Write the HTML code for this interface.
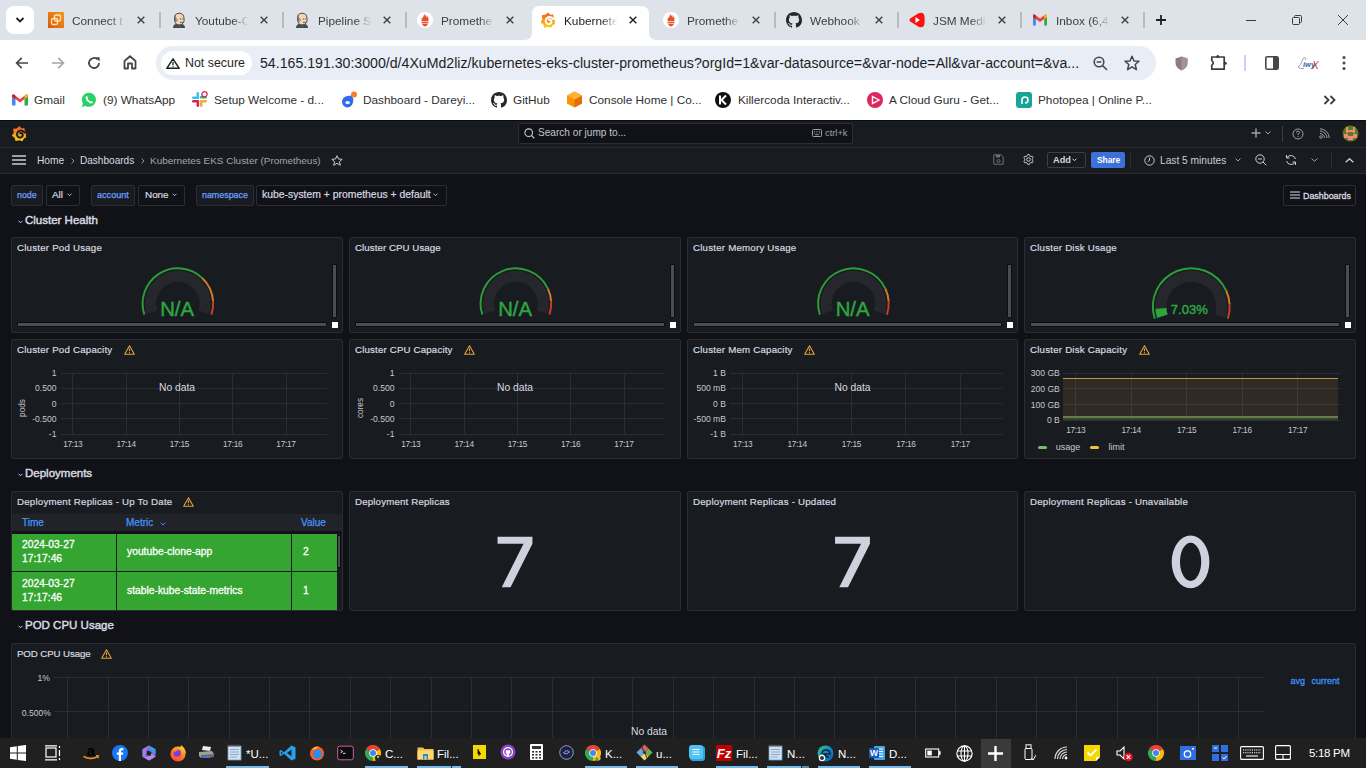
<!DOCTYPE html>
<html><head><meta charset="utf-8">
<style>
*{box-sizing:border-box;margin:0;padding:0}
html,body{width:1366px;height:768px;overflow:hidden;background:#111217;font-family:"Liberation Sans",sans-serif}
.a{position:absolute}
svg{display:block}
#tabs{position:absolute;left:0;top:0;width:1366px;height:40px;background:#dee3ea;overflow:hidden}
#toolbar{position:absolute;left:0;top:40px;width:1366px;height:46px;background:#fff}
#bm{position:absolute;left:0;top:86px;width:1366px;height:34px;background:#fff}
.tt{font-size:11.8px;white-space:nowrap;overflow:hidden;width:56px;line-height:14px;-webkit-mask-image:linear-gradient(90deg,#000 68%,transparent 96%)}
.bmt{position:absolute;top:7px;font-size:11.8px;line-height:14px;color:#303030;white-space:nowrap}
#g{position:absolute;left:0;top:120px;width:1366px;height:618px;background:#111217;overflow:hidden;color:#ccccdc}
.panel{position:absolute;background:#181b1f;border:1px solid #2a2c31;border-radius:2px;overflow:hidden}
.ptitle{position:absolute;left:5px;top:3.5px;font-size:9.7px;letter-spacing:0.22px;line-height:12px;font-weight:normal;-webkit-text-stroke:0.2px #d8d9e0;color:#d8d9e0;white-space:nowrap}
.rowt{position:absolute;left:25px;font-size:11.5px;line-height:14px;font-weight:normal;-webkit-text-stroke:0.45px #d8d9e0;color:#d8d9e0}
#task{position:absolute;left:0;top:738px;width:1366px;height:30px;background:#1f201f}

</style></head><body>
<div id="tabs"><div class="a" style="left:6px;top:6px;width:28px;height:28px;background:#fff;border-radius:8px"></div>
<svg class="a" style="left:15px;top:16px" width="10" height="8" viewBox="0 0 10 8"><path d="M1.5 2 L5 5.5 L8.5 2" fill="none" stroke="#1f1f1f" stroke-width="1.8"/></svg>
<svg class="a" style="left:524px;top:6px" width="133" height="34" viewBox="0 0 133 34"><path d="M0 34 Q8 34 8 26 L8 8 Q8 0 16 0 L117 0 Q125 0 125 8 L125 26 Q125 34 133 34Z" fill="#fff"/></svg>
<div class="a" style="left:48px;top:12px;width:16px;height:16px"><svg width="16" height="16" viewBox="0 0 16 16"><defs><linearGradient id="ag" x1="0" y1="1" x2="1" y2="0"><stop offset="0" stop-color="#d9590b"/><stop offset="1" stop-color="#f59a1b"/></linearGradient></defs><rect width="16" height="16" fill="url(#ag)"/><rect x="6.5" y="3" width="6" height="6" rx="1.5" fill="none" stroke="#fde3c8" stroke-width="1.3"/><rect x="3.5" y="6.5" width="6" height="6" rx="1.5" fill="none" stroke="#fde3c8" stroke-width="1.3"/></svg></div>
<div class="a tt" style="left:72px;top:14px;color:#3c4043">Connect t</div>
<svg class="a" style="left:137px;top:16px" width="8" height="8" viewBox="0 0 8 8"><path d="M.7 .7 L7.3 7.3 M7.3 .7 L.7 7.3" stroke="#3c4043" stroke-width="1.4"/></svg>
<div class="a" style="left:159px;top:12px;width:2px;height:16px;background:#b7bbc1"></div>
<div class="a" style="left:171px;top:12px;width:16px;height:16px"><svg width="16" height="16" viewBox="0 0 16 16"><path d="M2 16 Q2 12.5 5 12 L11 12 Q14 12.5 14 16Z" fill="#335061"/><path d="M6.5 13 L8 14 L9.5 13 L9.5 15 L8 14 L6.5 15Z" fill="#d33833"/><path d="M3.5 7 Q3 1.5 8 1.2 Q13 1.2 13 6.5 Q13.5 9 12.5 10.5 Q11 13 8 13 Q5.5 13 4.5 11 Q3.8 9.5 3.5 7Z" fill="#f0d6b7" stroke="#3a3a3a" stroke-width=".9"/><path d="M3.5 7.5 Q3 3 5 2.3 Q4.2 4.5 5.2 8 Z" fill="#6d6b6d"/><ellipse cx="5.3" cy="8" rx="1" ry="1.4" fill="#e8b996" stroke="#3a3a3a" stroke-width=".5"/><path d="M9 7 H10.3 M11.5 7 H12.3" stroke="#222" stroke-width=".8"/><path d="M9 10.5 Q10.5 10 12 10.6" fill="none" stroke="#5a4a3a" stroke-width=".9"/></svg></div>
<div class="a tt" style="left:195px;top:14px;color:#3c4043">Youtube-C</div>
<svg class="a" style="left:260px;top:16px" width="8" height="8" viewBox="0 0 8 8"><path d="M.7 .7 L7.3 7.3 M7.3 .7 L.7 7.3" stroke="#3c4043" stroke-width="1.4"/></svg>
<div class="a" style="left:282px;top:12px;width:2px;height:16px;background:#b7bbc1"></div>
<div class="a" style="left:294px;top:12px;width:16px;height:16px"><svg width="16" height="16" viewBox="0 0 16 16"><path d="M2 16 Q2 12.5 5 12 L11 12 Q14 12.5 14 16Z" fill="#335061"/><path d="M6.5 13 L8 14 L9.5 13 L9.5 15 L8 14 L6.5 15Z" fill="#d33833"/><path d="M3.5 7 Q3 1.5 8 1.2 Q13 1.2 13 6.5 Q13.5 9 12.5 10.5 Q11 13 8 13 Q5.5 13 4.5 11 Q3.8 9.5 3.5 7Z" fill="#f0d6b7" stroke="#3a3a3a" stroke-width=".9"/><path d="M3.5 7.5 Q3 3 5 2.3 Q4.2 4.5 5.2 8 Z" fill="#6d6b6d"/><ellipse cx="5.3" cy="8" rx="1" ry="1.4" fill="#e8b996" stroke="#3a3a3a" stroke-width=".5"/><path d="M9 7 H10.3 M11.5 7 H12.3" stroke="#222" stroke-width=".8"/><path d="M9 10.5 Q10.5 10 12 10.6" fill="none" stroke="#5a4a3a" stroke-width=".9"/></svg></div>
<div class="a tt" style="left:318px;top:14px;color:#3c4043">Pipeline S</div>
<svg class="a" style="left:383px;top:16px" width="8" height="8" viewBox="0 0 8 8"><path d="M.7 .7 L7.3 7.3 M7.3 .7 L.7 7.3" stroke="#3c4043" stroke-width="1.4"/></svg>
<div class="a" style="left:405px;top:12px;width:2px;height:16px;background:#b7bbc1"></div>
<div class="a" style="left:417px;top:12px;width:16px;height:16px"><svg width="16" height="16" viewBox="0 0 16 16"><circle cx="8" cy="8" r="8" fill="#fff"/><path d="M4.6 9.3 Q4.2 6.5 5.5 5 L5.8 6.5 Q6.3 4 7.6 1.8 L8 4.5 Q8.8 3 9.2 2.6 L9.6 5.5 L10.6 4.2 Q11.9 6.8 11.4 9.3Z" fill="#e6522c"/><rect x="4.6" y="9.9" width="6.8" height="1.5" fill="#e6522c"/><path d="M5.2 12 H10.8 Q10.4 14.4 8 14.4 Q5.6 14.4 5.2 12Z" fill="#e6522c"/></svg></div>
<div class="a tt" style="left:441px;top:14px;color:#3c4043">Promethe</div>
<svg class="a" style="left:506px;top:16px" width="8" height="8" viewBox="0 0 8 8"><path d="M.7 .7 L7.3 7.3 M7.3 .7 L.7 7.3" stroke="#3c4043" stroke-width="1.4"/></svg>
<div class="a" style="left:540px;top:12px;width:16px;height:16px"><svg width="16" height="16" viewBox="3.4 3.6 15.8 15.8"><defs><linearGradient id="glg2" gradientUnits="userSpaceOnUse" x1="0" y1="19" x2="0" y2="4"><stop offset="0" stop-color="#fcd20c"/><stop offset=".5" stop-color="#f8941d"/><stop offset="1" stop-color="#f05a28"/></linearGradient></defs><path d="M11.6 4 L13.5 6.4 L16.4 6 L16.7 8.5 L18.8 10.3 L17.9 12.6 L18.1 15.6 L16 16.5 L14.3 19.2 L11.5 18.3 L7.5 19.1 L6.9 16.2 L3.8 13.6 L5.7 11 L5.1 6.8 L8.4 6.4Z" fill="url(#glg2)"/><path d="M19 10.2 L16.40 10.45 L15.95 9.91 L15.43 9.45 L14.85 9.08 L14.23 8.82 L13.58 8.66 L12.93 8.60 L12.29 8.64 L11.67 8.79 L11.09 9.02 L10.56 9.34 L10.10 9.74 L9.71 10.19 L9.41 10.69 L9.19 11.23 L9.06 11.78 L9.02 12.33 L9.07 12.88 L9.20 13.40 L9.41 13.89 L9.69 14.32 L10.02 14.71 L10.41 15.02 L10.83 15.27 L11.28 15.44 L11.74 15.54 L12.20 15.56 L12.65 15.51 L13.07 15.39 L13.46 15.21 L13.81 14.97 L14.11 14.69 L14.36 14.37 L14.54 14.03 L14.67 13.67 L14.73 13.30 L14.74 12.94 L14.68 12.59 L14.58 12.26 L14.43 11.96 L14.23 11.70 L14.01 11.48 L13.75 11.31 L13.49 11.18 L13.21 11.10 L12.94 11.07 L12.67 11.08 L12.42 11.14 L12.19 11.23" fill="none" stroke="#fff" stroke-width="1.9" stroke-linecap="round"/></svg></div>
<div class="a tt" style="left:564px;top:14px;color:#1f1f1f">Kubernete</div>
<svg class="a" style="left:629px;top:16px" width="8" height="8" viewBox="0 0 8 8"><path d="M.7 .7 L7.3 7.3 M7.3 .7 L.7 7.3" stroke="#1f1f1f" stroke-width="1.4"/></svg>
<div class="a" style="left:663px;top:12px;width:16px;height:16px"><svg width="16" height="16" viewBox="0 0 16 16"><circle cx="8" cy="8" r="8" fill="#fff"/><path d="M4.6 9.3 Q4.2 6.5 5.5 5 L5.8 6.5 Q6.3 4 7.6 1.8 L8 4.5 Q8.8 3 9.2 2.6 L9.6 5.5 L10.6 4.2 Q11.9 6.8 11.4 9.3Z" fill="#e6522c"/><rect x="4.6" y="9.9" width="6.8" height="1.5" fill="#e6522c"/><path d="M5.2 12 H10.8 Q10.4 14.4 8 14.4 Q5.6 14.4 5.2 12Z" fill="#e6522c"/></svg></div>
<div class="a tt" style="left:687px;top:14px;color:#3c4043">Promethe</div>
<svg class="a" style="left:752px;top:16px" width="8" height="8" viewBox="0 0 8 8"><path d="M.7 .7 L7.3 7.3 M7.3 .7 L.7 7.3" stroke="#3c4043" stroke-width="1.4"/></svg>
<div class="a" style="left:774px;top:12px;width:2px;height:16px;background:#b7bbc1"></div>
<div class="a" style="left:786px;top:12px;width:16px;height:16px"><svg width="16" height="16" viewBox="0 0 16 16"><path fill="#24292f" d="M8 0C3.58 0 0 3.58 0 8c0 3.54 2.29 6.53 5.47 7.59.4.07.55-.17.55-.38 0-.19-.01-.82-.01-1.49-2.01.37-2.53-.49-2.69-.94-.09-.23-.48-.94-.82-1.13-.28-.15-.68-.52-.01-.53.63-.01 1.08.58 1.23.82.72 1.21 1.87.87 2.33.66.07-.52.28-.87.51-1.07-1.78-.2-3.640-.89-3.64-3.95 0-.87.31-1.59.82-2.15-.08-.2-.36-1.02.08-2.12 0 0 .67-.21 2.2.82.64-.18 1.32-.27 2-.27.68 0 1.36.09 2 .27 1.530-1.04 2.2-.82 2.2-.82.44 1.1.16 1.92.08 2.12.51.56.82 1.27.82 2.15 0 3.07-1.87 3.75-3.65 3.95.29.25.54.73.54 1.48 0 1.07-.01 1.93-.01 2.2 0 .21.15.46.55.38A8.013 8.013 0 0016 8c0-4.42-3.58-8-8-8z"/></svg></div>
<div class="a tt" style="left:810px;top:14px;color:#3c4043">Webhook</div>
<svg class="a" style="left:875px;top:16px" width="8" height="8" viewBox="0 0 8 8"><path d="M.7 .7 L7.3 7.3 M7.3 .7 L.7 7.3" stroke="#3c4043" stroke-width="1.4"/></svg>
<div class="a" style="left:897px;top:12px;width:2px;height:16px;background:#b7bbc1"></div>
<div class="a" style="left:909px;top:12px;width:16px;height:16px"><svg width="16" height="16" viewBox="0 0 16 16"><path d="M1.2 6.6 L9.5 1.3 Q15.3 -1 15.6 5.5 V10.5 Q15.3 17 9.5 14.7 L1.2 9.4 Q-.2 8 1.2 6.6Z" fill="#f81414"/><path d="M6.5 5 L10.8 8 L6.5 11Z" fill="#fff"/></svg></div>
<div class="a tt" style="left:933px;top:14px;color:#3c4043">JSM Medi</div>
<svg class="a" style="left:998px;top:16px" width="8" height="8" viewBox="0 0 8 8"><path d="M.7 .7 L7.3 7.3 M7.3 .7 L.7 7.3" stroke="#3c4043" stroke-width="1.4"/></svg>
<div class="a" style="left:1020px;top:12px;width:2px;height:16px;background:#b7bbc1"></div>
<div class="a" style="left:1032px;top:12px;width:16px;height:16px"><svg width="16" height="16" viewBox="0 0 16 16"><path d="M1 4 L1 13.5 L3.8 13.5 L3.8 6.5 Z" fill="#4285f4"/><path d="M12.2 6.5 L12.2 13.5 L15 13.5 L15 4 Z" fill="#34a853"/><path d="M1 4 Q1 2 3 2.8 L8 6.6 L13 2.8 Q15 2 15 4 L15 5 L12.2 7 L8 10 L3.8 7 L1 5Z" fill="#ea4335"/><path d="M12.2 7 L15 5 L15 4 Q15 2 13 2.8 L12.2 3.4Z" fill="#fbbc04"/><path d="M1 4 Q1 2 3 2.8 L3.8 3.4 L3.8 7 L1 5Z" fill="#c5221f"/></svg></div>
<div class="a tt" style="left:1056px;top:14px;color:#3c4043">Inbox (6,4</div>
<svg class="a" style="left:1121px;top:16px" width="8" height="8" viewBox="0 0 8 8"><path d="M.7 .7 L7.3 7.3 M7.3 .7 L.7 7.3" stroke="#3c4043" stroke-width="1.4"/></svg>
<div class="a" style="left:1143px;top:12px;width:2px;height:16px;background:#b7bbc1"></div>
<svg class="a" style="left:1156px;top:15px" width="10" height="10" viewBox="0 0 10 10"><path d="M5 0 V10 M0 5 H10" stroke="#1f1f1f" stroke-width="1.8"/></svg>
<div class="a" style="left:1246px;top:20px;width:10px;height:1px;background:#3c3c3c"></div>
<svg class="a" style="left:1292px;top:15px" width="10" height="10" viewBox="0 0 10 10"><rect x=".5" y="2.5" width="7" height="7" rx="1" fill="none" stroke="#3c3c3c"/><path d="M2.5 2.5 V1.5 Q2.5 .5 3.5 .5 H8.5 Q9.5 .5 9.5 1.5 V6.5 Q9.5 7.5 8.5 7.5 H7.5" fill="none" stroke="#3c3c3c"/></svg>
<svg class="a" style="left:1338px;top:15px" width="10" height="10" viewBox="0 0 10 10"><path d="M0 0 L10 10 M10 0 L0 10" stroke="#3c3c3c" stroke-width="1"/></svg></div>
<div id="toolbar"><svg class="a" style="left:15px;top:16px" width="14" height="14" viewBox="0 0 14 14"><path d="M13 7 H1.8 M6.8 1.8 L1.6 7 L6.8 12.2" fill="none" stroke="#474747" stroke-width="1.7"/></svg>
<svg class="a" style="left:52px;top:16px" width="13" height="14" viewBox="0 0 13 14"><path d="M0 7 H11.2 M6.2 1.8 L11.4 7 L6.2 12.2" fill="none" stroke="#a6a6a6" stroke-width="1.7"/></svg>
<svg class="a" style="left:87px;top:16px" width="14" height="14" viewBox="0 0 14 14"><path d="M12 7 A5 5 0 1 1 10.5 3.4" fill="none" stroke="#474747" stroke-width="1.8"/><path d="M8.2 1.2 L12.6 1.2 L12.6 5.6Z" fill="#474747"/></svg>
<svg class="a" style="left:123px;top:15px" width="14" height="15" viewBox="0 0 14 15"><path d="M1.5 6 L7 1.3 L12.5 6 V13.5 H9 V8.5 H5 V13.5 H1.5Z" fill="none" stroke="#474747" stroke-width="1.8" stroke-linejoin="round"/></svg>
<div class="a" style="left:156px;top:6px;width:1000px;height:34px;background:#e9edf6;border-radius:17px"></div>
<div class="a" style="left:161px;top:11px;width:91px;height:24px;background:#fff;border-radius:12px"></div>
<svg class="a" style="left:166px;top:18px" width="14" height="11" viewBox="0 0 14 11"><path d="M7 .8 L13.2 10.3 H.8Z" fill="none" stroke="#1f1f1f" stroke-width="1.5" stroke-linejoin="round"/><path d="M7 4 V7.2" stroke="#1f1f1f" stroke-width="1.3"/><circle cx="7" cy="8.6" r=".7" fill="#1f1f1f"/></svg>
<div class="a" style="left:185px;top:15px;font-size:12.4px;line-height:16px;color:#1f1f1f;white-space:nowrap">Not secure</div>
<div class="a" style="left:260px;top:15px;font-size:14.15px;line-height:17px;color:#1f1f1f;white-space:nowrap">54.165.191.30:3000/d/4XuMd2liz/kubernetes-eks-cluster-prometheus?orgId=1&amp;var-datasource=&amp;var-node=All&amp;var-account=&amp;va...</div>
<svg class="a" style="left:1093px;top:16px" width="15" height="15" viewBox="0 0 15 15"><circle cx="6" cy="6" r="4.8" fill="none" stroke="#474747" stroke-width="1.6"/><path d="M3.6 6 H8.4 M9.5 9.5 L14 14" stroke="#474747" stroke-width="1.6"/></svg>
<svg class="a" style="left:1124px;top:15px" width="16" height="16" viewBox="0 0 16 16"><path d="M8 1.2 L10 6 L15 6.3 L11.2 9.5 L12.4 14.6 L8 11.8 L3.6 14.6 L4.8 9.5 L1 6.3 L6 6Z" fill="none" stroke="#474747" stroke-width="1.5" stroke-linejoin="round"/></svg>
<svg class="a" style="left:1175px;top:16px" width="13" height="15" viewBox="0 0 13 15"><path d="M6.5 .5 L12.5 2.5 V7 Q12.5 12 6.5 14.5 Q.5 12 .5 7 V2.5Z" fill="#8e7d7c"/><path d="M6.5 .5 L12.5 2.5 V7 Q12.5 12 6.5 14.5Z" fill="#a39392"/></svg>
<svg class="a" style="left:1210px;top:14px" width="18" height="18" viewBox="0 0 18 18"><path d="M1.8 3 H14.2 V15.2 H1.8 V11.2 Q4.6 9.2 1.8 6.5Z" fill="none" stroke="#3c3c3c" stroke-width="1.7" stroke-linejoin="round"/><circle cx="7.8" cy="2.4" r="1.5" fill="#3c3c3c"/><circle cx="15.2" cy="9.2" r="1.5" fill="#3c3c3c"/></svg>
<div class="a" style="left:1244px;top:15px;width:2px;height:16px;background:#c5d5f3"></div>
<svg class="a" style="left:1265px;top:16px" width="14" height="14" viewBox="0 0 14 14"><rect x=".8" y=".8" width="12.4" height="12.4" rx="1.5" fill="none" stroke="#474747" stroke-width="1.6"/><rect x="8" y="1" width="5" height="12" fill="#474747"/></svg>
<svg class="a" style="left:1297px;top:16px" width="22" height="14" viewBox="0 0 22 14"><path d="M1 11 Q3 13 7 12.5 M1 11 Q4 9 5 5 Q6 1 8 1.5 Q9.5 2 8.5 4" fill="none" stroke="#777" stroke-width=".7"/><text x="6" y="11" font-family="Liberation Sans" font-style="italic" font-weight="bold" font-size="7.5" fill="#2a6bb5">iwy</text><text x="15" y="12.5" font-family="Liberation Sans" font-style="italic" font-size="10" fill="#e8262a">X</text></svg>
<svg class="a" style="left:1341px;top:16px" width="6" height="15" viewBox="0 0 6 15"><circle cx="3" cy="1.6" r="1.5" fill="#474747"/><circle cx="3" cy="7.1" r="1.5" fill="#474747"/><circle cx="3" cy="12.6" r="1.5" fill="#474747"/></svg>
</div>
<div id="bm"><svg class="a" style="left:12px;top:8px" width="16" height="12" viewBox="0 0 16 12"><path d="M0 2 V11.5 H3.5 V4.5Z" fill="#4285f4"/><path d="M12.5 4.5 V11.5 H16 V2Z" fill="#34a853"/><path d="M0 1.8 Q0 0 2 .6 L8 5.2 L14 .6 Q16 0 16 1.8 V2.5 L12.5 5 L8 8.4 L3.5 5 L0 2.5Z" fill="#ea4335"/><path d="M12.5 5 L16 2.5 V1.8 Q16 0 14 .6 L12.5 1.7Z" fill="#fbbc04"/><path d="M0 1.8 Q0 0 2 .6 L3.5 1.7 V5 L0 2.5Z" fill="#c5221f"/></svg>
<div class="bmt" style="left:34px">Gmail</div>
<svg class="a" style="left:81px;top:6px" width="16" height="16" viewBox="0 0 16 16"><path d="M8 .8 A7 7 0 0 1 8 14.8 A7 7 0 0 1 4.5 13.9 L.8 15 L1.9 11.5 A7 7 0 0 1 8 .8Z" fill="#25d366"/><path d="M5.2 4.3 Q5.8 3.9 6.3 4.3 L7 5.8 Q7.1 6.2 6.6 6.7 Q7.5 8.5 9.3 9.4 Q9.8 8.9 10.2 9 L11.7 9.7 Q12 10.3 11.6 10.8 Q10.7 11.8 9 11.2 Q5.5 9.8 4.6 6.6 Q4.3 5.2 5.2 4.3Z" fill="#fff"/></svg>
<div class="bmt" style="left:103px">(9) WhatsApp</div>
<svg class="a" style="left:191px;top:5px" width="17" height="17" viewBox="0 0 17 17"><rect x="5.5" y="1" width="2.6" height="7" rx="1.3" fill="#36c5f0"/><rect x="1" y="5.5" width="7" height="2.6" rx="1.3" fill="#36c5f0"/><rect x="8.9" y="9" width="2.6" height="7" rx="1.3" fill="#ecb22e"/><rect x="9" y="8.9" width="7" height="2.6" rx="1.3" fill="#ecb22e"/><rect x="1" y="9" width="7" height="2.6" rx="1.3" fill="#e01e5a"/><rect x="5.5" y="9" width="2.6" height="7" rx="1.3" fill="#e01e5a"/><rect x="8.9" y="5" width="7" height="2.6" rx="1.3" fill="#2eb67d"/><circle cx="13.5" cy="3.3" r="2.6" fill="#fff" stroke="#e01e5a" stroke-width="1.2"/></svg>
<div class="bmt" style="left:214px">Setup Welcome - d...</div>
<svg class="a" style="left:341px;top:5px" width="17" height="17" viewBox="0 0 17 17"><path d="M6.5 16.5 A5.8 5.8 0 0 1 1 10.5 A5.8 5.8 0 0 1 6.5 5 L10.5 4.5 L12.5 8 L12 11 A5.8 5.8 0 0 1 6.5 16.5Z" fill="#2f6bec"/><ellipse cx="6.6" cy="11.6" rx="2.3" ry="1.6" fill="#fff"/><circle cx="13" cy="3.6" r="3" fill="#f5822a"/></svg>
<div class="bmt" style="left:363px">Dashboard - Dareyi...</div>
<svg class="a" style="left:491px;top:6px" width="16" height="16" viewBox="0 0 16 16"><path fill="#24292f" d="M8 0C3.58 0 0 3.58 0 8c0 3.54 2.29 6.53 5.47 7.59.4.07.55-.17.55-.38 0-.19-.01-.82-.01-1.49-2.01.37-2.53-.49-2.69-.94-.09-.23-.48-.94-.82-1.13-.28-.15-.68-.52-.01-.53.63-.01 1.08.58 1.23.82.72 1.21 1.87.87 2.33.66.07-.52.28-.87.51-1.07-1.78-.2-3.64-.89-3.64-3.95 0-.87.31-1.59.82-2.15-.08-.2-.36-1.02.08-2.12 0 0 .67-.21 2.2.82.64-.18 1.32-.27 2-.27.68 0 1.36.09 2 .27 1.53-1.04 2.2-.82 2.2-.82.44 1.1.16 1.92.08 2.12.51.56.82 1.27.82 2.15 0 3.07-1.87 3.75-3.65 3.95.29.25.54.73.54 1.48 0 1.07-.01 1.93-.01 2.2 0 .21.15.46.55.38A8.013 8.013 0 0016 8c0-4.42-3.58-8-8-8z"/></svg>
<div class="bmt" style="left:513px">GitHub</div>
<svg class="a" style="left:566px;top:5px" width="17" height="17" viewBox="0 0 17 17"><path d="M8.5 .5 L16 4.5 V12.5 L8.5 16.5 L1 12.5 V4.5Z" fill="#f79400"/><path d="M8.5 8.5 L16 4.5 V12.5 L8.5 16.5Z" fill="#e07000"/><path d="M1 4.5 L8.5 8.5 L16 4.5 L8.5 .5Z" fill="#ffb13b"/></svg>
<div class="bmt" style="left:589px">Console Home | Co...</div>
<svg class="a" style="left:715px;top:6px" width="16" height="16" viewBox="0 0 16 16"><circle cx="8" cy="8" r="8" fill="#111"/><path d="M5 3.5 V12.5 M11 3.5 L6.5 8 L11 12.5" fill="none" stroke="#fff" stroke-width="2"/></svg>
<div class="bmt" style="left:738px">Killercoda Interactiv...</div>
<svg class="a" style="left:867px;top:6px" width="16" height="16" viewBox="0 0 16 16"><circle cx="8" cy="8" r="8" fill="#e0245e"/><path d="M5.5 4.5 L12 8 L5.5 11.5Z" fill="none" stroke="#fff" stroke-width="1.4"/></svg>
<div class="bmt" style="left:889px">A Cloud Guru - Get...</div>
<svg class="a" style="left:1016px;top:6px" width="16" height="16" viewBox="0 0 16 16"><rect width="16" height="16" rx="3" fill="#18a497"/><path d="M6 12 V8 A3 3 0 1 1 9 11" fill="none" stroke="#fff" stroke-width="1.6"/></svg>
<div class="bmt" style="left:1038px">Photopea | Online P...</div>
<svg class="a" style="left:1323px;top:9px" width="14" height="10" viewBox="0 0 14 10"><path d="M1.5 1 L5.5 5 L1.5 9 M7.5 1 L11.5 5 L7.5 9" fill="none" stroke="#3c3c3c" stroke-width="1.8"/></svg>
</div>
<div id="g"><div class="a" style="left:0;top:0;width:1366px;height:1px;background:#0b0c0e"></div>
<div class="a" style="left:0;top:1px;width:1366px;height:27px;background:#181b1f;border-bottom:1px solid #2a2c31"></div>
<div class="a" style="left:0;top:28px;width:1366px;height:26px;background:#181b1f;border-bottom:1px solid #2a2c31"></div>
<svg class="a" style="left:8px;top:2px" width="24" height="24" viewBox="0 0 24 24"><defs><linearGradient id="glg" gradientUnits="userSpaceOnUse" x1="0" y1="19" x2="0" y2="4"><stop offset="0" stop-color="#fcd20c"/><stop offset=".5" stop-color="#f8941d"/><stop offset="1" stop-color="#f05a28"/></linearGradient></defs><path d="M11.6 4 L13.5 6.4 L16.4 6 L16.7 8.5 L18.8 10.3 L17.9 12.6 L18.1 15.6 L16 16.5 L14.3 19.2 L11.5 18.3 L7.5 19.1 L6.9 16.2 L3.8 13.6 L5.7 11 L5.1 6.8 L8.4 6.4Z" fill="url(#glg)"/><path d="M19 10.2 L16.40 10.45 L15.95 9.91 L15.43 9.45 L14.85 9.08 L14.23 8.82 L13.58 8.66 L12.93 8.60 L12.29 8.64 L11.67 8.79 L11.09 9.02 L10.56 9.34 L10.10 9.74 L9.71 10.19 L9.41 10.69 L9.19 11.23 L9.06 11.78 L9.02 12.33 L9.07 12.88 L9.20 13.40 L9.41 13.89 L9.69 14.32 L10.02 14.71 L10.41 15.02 L10.83 15.27 L11.28 15.44 L11.74 15.54 L12.20 15.56 L12.65 15.51 L13.07 15.39 L13.46 15.21 L13.81 14.97 L14.11 14.69 L14.36 14.37 L14.54 14.03 L14.67 13.67 L14.73 13.30 L14.74 12.94 L14.68 12.59 L14.58 12.26 L14.43 11.96 L14.23 11.70 L14.01 11.48 L13.75 11.31 L13.49 11.18 L13.21 11.10 L12.94 11.07 L12.67 11.08 L12.42 11.14 L12.19 11.23" fill="none" stroke="#181b1f" stroke-width="1.9" stroke-linecap="round"/></svg>
<div class="a" style="left:518px;top:3px;width:335px;height:21px;background:#111217;border:1px solid #2c2e33;border-radius:2px"></div>
<svg class="a" style="left:524px;top:8px" width="11" height="11" viewBox="0 0 11 11"><circle cx="4.7" cy="4.7" r="3.8" fill="none" stroke="#ccccdc" stroke-width="1.1"/><path d="M7.5 7.5 L10.3 10.3" stroke="#ccccdc" stroke-width="1.1"/></svg>
<div class="a" style="left:538px;top:7px;font-size:10.1px;line-height:12px;color:#c3c4ce;white-space:nowrap">Search or jump to...</div>
<svg class="a" style="left:812px;top:9px" width="10" height="8" viewBox="0 0 10 8"><rect x=".5" y=".5" width="9" height="7" rx="1" fill="none" stroke="#a0a1aa"/><path d="M2 2.5 H3 M4.5 2.5 H5.5 M7 2.5 H8 M2 4 H3 M4.5 4 H5.5 M7 4 H8 M3 5.7 H7" stroke="#a0a1aa" stroke-width=".8"/></svg>
<div class="a" style="left:825px;top:8px;font-size:9.3px;line-height:11px;color:#a0a1aa;white-space:nowrap">ctrl+k</div>
<svg class="a" style="left:1251px;top:8px" width="10" height="10" viewBox="0 0 10 10"><path d="M5 .5 V9.5 M.5 5 H9.5" stroke="#9fa0a8" stroke-width="1.5"/></svg>
<svg class="a" style="left:1265px;top:11px" width="6" height="4" viewBox="0 0 6 4"><path d="M.5 .5 L3 3 L5.5 .5" fill="none" stroke="#9fa0a8" stroke-width="1"/></svg>
<div class="a" style="left:1282px;top:6px;width:1px;height:16px;background:#3a3c42"></div>
<svg class="a" style="left:1292px;top:8px" width="12" height="12" viewBox="0 0 12 12"><circle cx="6" cy="6" r="5" fill="none" stroke="#9fa0a8" stroke-width="1"/><path d="M4.4 4.6 Q4.4 3.2 6 3.2 Q7.6 3.2 7.6 4.5 Q7.6 5.4 6.2 6 V7" fill="none" stroke="#9fa0a8" stroke-width="1"/><circle cx="6.1" cy="8.5" r=".6" fill="#9fa0a8"/></svg>
<svg class="a" style="left:1319px;top:8px" width="11" height="11" viewBox="0 0 11 11"><circle cx="2" cy="9" r="1.3" fill="none" stroke="#9fa0a8" stroke-width=".9"/><path d="M1 5.5 A4.5 4.5 0 0 1 5.5 10 M1 3 A7 7 0 0 1 8 10 M1 .8 A9.2 9.2 0 0 1 10.2 10" fill="none" stroke="#9fa0a8" stroke-width="1"/></svg>
<svg class="a" style="left:1342px;top:5px" width="17" height="17" viewBox="0 0 17 17"><defs><clipPath id="av"><circle cx="8.5" cy="8.5" r="8"/></clipPath></defs><g clip-path="url(#av)"><rect width="17" height="17" fill="#5a7a1a"/><rect x="4" y="2" width="2" height="6" fill="#f08a80"/><rect x="11" y="2" width="2" height="6" fill="#f08a80"/><rect x="4" y="5" width="9" height="2" fill="#f08a80"/><rect x="2" y="9" width="4" height="4" fill="#f08a80"/><rect x="11" y="9" width="4" height="4" fill="#f08a80"/><rect x="6" y="11" width="5" height="4" fill="#f08a80"/><rect x="7" y="9" width="3" height="2" fill="#5a7a1a"/></g></svg>
<svg class="a" style="left:12px;top:35px" width="14" height="10" viewBox="0 0 14 10"><path d="M0 1 H14 M0 5 H14 M0 9 H14" stroke="#ccccdc" stroke-width="1.3"/></svg>
<div class="a" style="left:37px;top:33.5px;font-size:10.2px;line-height:13px;color:#d8d9e0;white-space:nowrap;font-weight:normal">Home</div>
<svg class="a" style="left:71px;top:38px" width="4" height="6" viewBox="0 0 4 6"><path d="M.5 .5 L3 3 L.5 5.5" fill="none" stroke="#9fa0a8" stroke-width=".9"/></svg>
<div class="a" style="left:80px;top:33.5px;font-size:10.05px;line-height:13px;color:#d8d9e0;white-space:nowrap">Dashboards</div>
<svg class="a" style="left:141px;top:38px" width="4" height="6" viewBox="0 0 4 6"><path d="M.5 .5 L3 3 L.5 5.5" fill="none" stroke="#9fa0a8" stroke-width=".9"/></svg>
<div class="a" style="left:150px;top:33.5px;font-size:9.95px;line-height:13px;color:#a5a6ae;white-space:nowrap">Kubernetes EKS Cluster (Prometheus)</div>
<svg class="a" style="left:331px;top:35px" width="12" height="11" viewBox="0 0 12 11"><path d="M6 .7 L7.5 4 L11.2 4.3 L8.4 6.7 L9.3 10.3 L6 8.3 L2.7 10.3 L3.6 6.7 L.8 4.3 L4.5 4Z" fill="none" stroke="#ccccdc" stroke-width="1" stroke-linejoin="round"/></svg>
<svg class="a" style="left:993px;top:34px" width="11" height="11" viewBox="0 0 11 11"><path d="M.8 .8 H8 L10.2 3 V10.2 H.8Z" fill="none" stroke="#6f7079" stroke-width="1"/><rect x="3" y="1" width="4" height="2.5" fill="#6f7079"/><circle cx="5.5" cy="7" r="1.5" fill="none" stroke="#6f7079" stroke-width="1"/></svg>
<svg class="a" style="left:1023px;top:34px" width="11" height="11" viewBox="0 0 11 11"><circle cx="5.5" cy="5.5" r="1.8" fill="none" stroke="#ccccdc" stroke-width="1"/><path d="M4.6 .6 H6.4 L6.8 1.9 L8 2.6 L9.3 2.2 L10.2 3.8 L9.2 4.7 V6.3 L10.2 7.2 L9.3 8.8 L8 8.4 L6.8 9.1 L6.4 10.4 H4.6 L4.2 9.1 L3 8.4 L1.7 8.8 L.8 7.2 L1.8 6.3 V4.7 L.8 3.8 L1.7 2.2 L3 2.6 L4.2 1.9Z" fill="none" stroke="#ccccdc" stroke-width=".9" stroke-linejoin="round"/></svg>
<div class="a" style="left:1047px;top:32px;width:39px;height:16px;border:1px solid #3d3f45;border-radius:2px"></div>
<div class="a" style="left:1053px;top:34px;font-size:9.2px;line-height:12px;color:#d8d9e0;font-weight:bold;white-space:nowrap">Add</div>
<svg class="a" style="left:1072px;top:38px" width="5" height="4" viewBox="0 0 5 4"><path d="M.5 .7 L2.5 2.7 L4.5 .7" fill="none" stroke="#d8d9e0" stroke-width="1"/></svg>
<div class="a" style="left:1091px;top:32px;width:34px;height:16px;background:#3d71d9;border-radius:2px"></div>
<div class="a" style="left:1097px;top:34px;font-size:8.4px;line-height:12px;color:#fff;font-weight:bold;white-space:nowrap">Share</div>
<div class="a" style="left:1130px;top:32px;width:1px;height:16px;background:#2c2e33"></div>
<svg class="a" style="left:1144px;top:35px" width="11" height="11" viewBox="0 0 11 11"><circle cx="5.5" cy="5.5" r="4.7" fill="none" stroke="#ccccdc" stroke-width="1"/><path d="M5.5 2.6 V5.5 L3.8 6.8" fill="none" stroke="#ccccdc" stroke-width="1"/></svg>
<div class="a" style="left:1160px;top:34px;font-size:10.2px;line-height:13px;color:#ccccdc;white-space:nowrap">Last 5 minutes</div>
<svg class="a" style="left:1235px;top:38px" width="6" height="4" viewBox="0 0 6 4"><path d="M.5 .5 L3 3 L5.5 .5" fill="none" stroke="#9fa0a8" stroke-width="1"/></svg>
<svg class="a" style="left:1255px;top:34px" width="12" height="12" viewBox="0 0 12 12"><circle cx="5" cy="5" r="4.2" fill="none" stroke="#ccccdc" stroke-width="1"/><path d="M3 5 H7 M8 8 L11.3 11.3" stroke="#ccccdc" stroke-width="1"/></svg>
<svg class="a" style="left:1285px;top:34px" width="12" height="12" viewBox="0 0 12 12"><path d="M10.5 5 A4.8 4.8 0 0 0 2 3.5 M1.5 7 A4.8 4.8 0 0 0 10 8.5" fill="none" stroke="#ccccdc" stroke-width="1"/><path d="M1.5 1 V4 H4.5 M10.5 11 V8 H7.5" fill="none" stroke="#ccccdc" stroke-width="1"/></svg>
<svg class="a" style="left:1311px;top:38px" width="7" height="4" viewBox="0 0 7 4"><path d="M.5 .5 L3.5 3.3 L6.5 .5" fill="none" stroke="#9fa0a8" stroke-width="1"/></svg>
<div class="a" style="left:1331px;top:32px;width:1px;height:16px;background:#2c2e33"></div>
<svg class="a" style="left:1345px;top:38px" width="9" height="5" viewBox="0 0 9 5"><path d="M.7 4.3 L4.5 .7 L8.3 4.3" fill="none" stroke="#ccccdc" stroke-width="1.3"/></svg>
<!-- variables -->
<div class="a" style="left:11px;top:65px;width:32px;height:21px;background:#181b1f;border:1px solid #2c2e33;border-radius:2px"></div>
<div class="a" style="left:17px;top:69px;font-size:8.9px;line-height:12px;color:#6e9fff;-webkit-text-stroke:0.25px #6e9fff;white-space:nowrap">node</div>
<div class="a" style="left:46px;top:65px;width:34px;height:21px;background:#111217;border:1px solid #2c2e33;border-radius:2px"></div>
<div class="a" style="left:52px;top:68px;font-size:9.9px;line-height:13px;color:#d8d9e0;-webkit-text-stroke:0.2px #d8d9e0;white-space:nowrap">All</div>
<svg class="a" style="left:67px;top:73px" width="5" height="4" viewBox="0 0 5 4"><path d="M.5 .7 L2.5 2.7 L4.5 .7" fill="none" stroke="#ccccdc" stroke-width=".9"/></svg>
<div class="a" style="left:91px;top:65px;width:44px;height:21px;background:#181b1f;border:1px solid #2c2e33;border-radius:2px"></div>
<div class="a" style="left:97px;top:69px;font-size:9.1px;line-height:12px;color:#6e9fff;-webkit-text-stroke:0.25px #6e9fff;white-space:nowrap">account</div>
<div class="a" style="left:138px;top:65px;width:47px;height:21px;background:#111217;border:1px solid #2c2e33;border-radius:2px"></div>
<div class="a" style="left:145px;top:68px;font-size:9.9px;line-height:13px;color:#d8d9e0;-webkit-text-stroke:0.2px #d8d9e0;white-space:nowrap">None</div>
<svg class="a" style="left:172px;top:73px" width="5" height="4" viewBox="0 0 5 4"><path d="M.5 .7 L2.5 2.7 L4.5 .7" fill="none" stroke="#ccccdc" stroke-width=".9"/></svg>
<div class="a" style="left:196px;top:65px;width:58px;height:21px;background:#181b1f;border:1px solid #2c2e33;border-radius:2px"></div>
<div class="a" style="left:202px;top:69px;font-size:8.9px;line-height:12px;color:#6e9fff;-webkit-text-stroke:0.25px #6e9fff;white-space:nowrap">namespace</div>
<div class="a" style="left:256px;top:65px;width:191px;height:21px;background:#111217;border:1px solid #2c2e33;border-radius:2px"></div>
<div class="a" style="left:262px;top:68px;font-size:10.4px;line-height:13px;color:#d8d9e0;-webkit-text-stroke:0.2px #d8d9e0;white-space:nowrap">kube-system + prometheus + default</div>
<svg class="a" style="left:433px;top:73px" width="5" height="4" viewBox="0 0 5 4"><path d="M.5 .7 L2.5 2.7 L4.5 .7" fill="none" stroke="#ccccdc" stroke-width=".9"/></svg>
<div class="a" style="left:1283px;top:65px;width:73px;height:21px;background:#111217;border:1px solid #2c2e33;border-radius:2px"></div>
<svg class="a" style="left:1290px;top:71px" width="10" height="8" viewBox="0 0 10 8"><path d="M0 1 H10 M0 4 H10 M0 7 H10" stroke="#d8d9e0" stroke-width="1"/></svg>
<div class="a" style="left:1303px;top:70px;font-size:8.9px;line-height:12px;color:#d8d9e0;-webkit-text-stroke:0.3px #d8d9e0;white-space:nowrap">Dashboards</div>
<svg class="a" style="left:17.5px;top:100px" width="5" height="4" viewBox="0 0 5 4"><path d="M.5 .8 L2.5 2.8 L4.5 .8" fill="none" stroke="#ccccdc" stroke-width="1"/></svg>
<div class="rowt" style="top:93.4px">Cluster Health</div>
<div class="panel" style="left:11px;top:117px;width:332px;height:96px;">
<div class="ptitle">Cluster Pod Usage</div>
<svg class="a" style="left:0;top:0" width="332" height="95" viewBox="12 238 332 95">
<path d="M146.66 313.93 A32.9 32.9 0 1 1 209.14 313.93 L198.60 310.45 A21.8 21.8 0 1 0 157.20 310.45Z" fill="#25272d"/>
<path d="M144.39 314.68 A35.3 35.3 0 0 1 202.12 277.92" fill="none" stroke="#2c9c3a" stroke-width="2"/>
<path d="M202.12 277.92 A35.3 35.3 0 0 1 213.14 301.53" fill="none" stroke="#cf7c26" stroke-width="2"/>
<path d="M213.14 301.53 A35.3 35.3 0 0 1 211.41 314.68" fill="none" stroke="#c63f2c" stroke-width="2"/>
<text x="177.1" y="315.9" text-anchor="middle" font-family="Liberation Sans" font-size="20.3" fill="#2ea640" stroke="#2ea640" stroke-width="0.45">N/A</text>
</svg>
<div class="a" style="left:5px;top:84px;width:310px;height:5px;background:#4b4c56;border:1px solid #0c0d10;border-radius:1px"></div>
<div class="a" style="left:320px;top:26px;width:5px;height:54px;background:#4b4c56;border:1px solid #0c0d10;border-radius:1px"></div>
<div class="a" style="left:320px;top:84px;width:6px;height:6px;background:#fff"></div>
</div>
<div class="panel" style="left:349px;top:117px;width:332px;height:96px;">
<div class="ptitle" style="letter-spacing:0.07px">Cluster CPU Usage</div>
<svg class="a" style="left:0;top:0" width="332" height="95" viewBox="350 238 332 95">
<path d="M484.66 313.93 A32.9 32.9 0 1 1 547.14 313.93 L536.60 310.45 A21.8 21.8 0 1 0 495.20 310.45Z" fill="#25272d"/>
<path d="M482.39 314.68 A35.3 35.3 0 0 1 547.89 288.67" fill="none" stroke="#2c9c3a" stroke-width="2"/>
<path d="M547.89 288.67 A35.3 35.3 0 0 1 551.14 301.53" fill="none" stroke="#cf7c26" stroke-width="2"/>
<path d="M551.14 301.53 A35.3 35.3 0 0 1 549.41 314.68" fill="none" stroke="#c63f2c" stroke-width="2"/>
<text x="515.1" y="315.9" text-anchor="middle" font-family="Liberation Sans" font-size="20.3" fill="#2ea640" stroke="#2ea640" stroke-width="0.45">N/A</text>
</svg>
<div class="a" style="left:5px;top:84px;width:310px;height:5px;background:#4b4c56;border:1px solid #0c0d10;border-radius:1px"></div>
<div class="a" style="left:320px;top:26px;width:5px;height:54px;background:#4b4c56;border:1px solid #0c0d10;border-radius:1px"></div>
<div class="a" style="left:320px;top:84px;width:6px;height:6px;background:#fff"></div>
</div>
<div class="panel" style="left:687px;top:117px;width:331px;height:96px;">
<div class="ptitle">Cluster Memory Usage</div>
<svg class="a" style="left:0;top:0" width="332" height="95" viewBox="688 238 332 95">
<path d="M822.16 313.93 A32.9 32.9 0 1 1 884.64 313.93 L874.10 310.45 A21.8 21.8 0 1 0 832.70 310.45Z" fill="#25272d"/>
<path d="M819.89 314.68 A35.3 35.3 0 0 1 885.39 288.67" fill="none" stroke="#2c9c3a" stroke-width="2"/>
<path d="M885.39 288.67 A35.3 35.3 0 0 1 888.64 301.53" fill="none" stroke="#cf7c26" stroke-width="2"/>
<path d="M888.64 301.53 A35.3 35.3 0 0 1 886.91 314.68" fill="none" stroke="#c63f2c" stroke-width="2"/>
<text x="852.6" y="315.9" text-anchor="middle" font-family="Liberation Sans" font-size="20.3" fill="#2ea640" stroke="#2ea640" stroke-width="0.45">N/A</text>
</svg>
<div class="a" style="left:5px;top:84px;width:309px;height:5px;background:#4b4c56;border:1px solid #0c0d10;border-radius:1px"></div>
<div class="a" style="left:319px;top:26px;width:5px;height:54px;background:#4b4c56;border:1px solid #0c0d10;border-radius:1px"></div>
<div class="a" style="left:319px;top:84px;width:6px;height:6px;background:#fff"></div>
</div>
<div class="panel" style="left:1024px;top:117px;width:332px;height:96px;">
<div class="ptitle">Cluster Disk Usage</div>
<svg class="a" style="left:0;top:0" width="332" height="95" viewBox="1025 238 332 95">
<path d="M1157.12 318.00 A36.0 36.0 0 1 1 1225.48 318.00 L1214.94 314.52 A24.9 24.9 0 1 0 1167.66 314.52Z" fill="#25272d"/>
<path d="M1157.12 318.00 A36.0 36.0 0 0 1 1155.35 308.63 L1166.44 308.03 A24.9 24.9 0 0 0 1167.66 314.52Z" fill="#2ea43c"/>
<path d="M1154.84 318.76 A38.4 38.4 0 0 1 1226.10 290.46" fill="none" stroke="#2c9c3a" stroke-width="2"/>
<path d="M1226.10 290.46 A38.4 38.4 0 0 1 1229.63 304.45" fill="none" stroke="#cf7c26" stroke-width="2"/>
<path d="M1229.63 304.45 A38.4 38.4 0 0 1 1227.76 318.76" fill="none" stroke="#c63f2c" stroke-width="2"/>
<text x="1189.3000000000002" y="314.2" text-anchor="middle" font-family="Liberation Sans" font-size="13" fill="#2ea640" stroke="#2ea640" stroke-width="0.45">7.03%</text>
</svg>
<div class="a" style="left:5px;top:84px;width:310px;height:5px;background:#4b4c56;border:1px solid #0c0d10;border-radius:1px"></div>
<div class="a" style="left:320px;top:26px;width:5px;height:54px;background:#4b4c56;border:1px solid #0c0d10;border-radius:1px"></div>
<div class="a" style="left:320px;top:84px;width:6px;height:6px;background:#fff"></div>
</div>
<div class="panel" style="left:11px;top:219px;width:332px;height:120px;">
<div class="ptitle">Cluster Pod Capacity</div>
<svg class="a" style="left:112px;top:5px" width="11" height="10" viewBox="0 0 11 10"><path d="M5.5 .8 L10.3 9.3 H.7Z" fill="none" stroke="#e6a23c" stroke-width="1.1" stroke-linejoin="round"/><path d="M5.5 3.6 V6.3" stroke="#e6a23c" stroke-width="1.1"/><circle cx="5.5" cy="7.7" r=".6" fill="#e6a23c"/></svg>
<div class="a" style="left:48.5px;top:32.8px;width:266.5px;height:1px;background:#2b2d32"></div>
<div class="a" style="left:48.5px;top:47.6px;width:266.5px;height:1px;background:#2b2d32"></div>
<div class="a" style="left:48.5px;top:63.1px;width:266.5px;height:1px;background:#2b2d32"></div>
<div class="a" style="left:48.5px;top:78.4px;width:266.5px;height:1px;background:#2b2d32"></div>
<div class="a" style="left:48.5px;top:93.9px;width:266.5px;height:1px;background:#2b2d32"></div>
<div class="a" style="left:60.3px;top:32.8px;width:1px;height:62.1px;background:#2b2d32"></div>
<div class="a" style="left:113.6px;top:32.8px;width:1px;height:62.1px;background:#2b2d32"></div>
<div class="a" style="left:166.9px;top:32.8px;width:1px;height:62.1px;background:#2b2d32"></div>
<div class="a" style="left:220.2px;top:32.8px;width:1px;height:62.1px;background:#2b2d32"></div>
<div class="a" style="left:273.5px;top:32.8px;width:1px;height:62.1px;background:#2b2d32"></div>
<div class="a" style="left:-155.5px;width:200px;text-align:right;top:28.3px;font-size:8.6px;line-height:10px;color:#c7c8d2;white-space:nowrap;">1</div>
<div class="a" style="left:-155.5px;width:200px;text-align:right;top:43.1px;font-size:8.6px;line-height:10px;color:#c7c8d2;white-space:nowrap;">0.500</div>
<div class="a" style="left:-155.5px;width:200px;text-align:right;top:58.6px;font-size:8.6px;line-height:10px;color:#c7c8d2;white-space:nowrap;">0</div>
<div class="a" style="left:-155.5px;width:200px;text-align:right;top:73.9px;font-size:8.6px;line-height:10px;color:#c7c8d2;white-space:nowrap;">-0.500</div>
<div class="a" style="left:-155.5px;width:200px;text-align:right;top:89.4px;font-size:8.6px;line-height:10px;color:#c7c8d2;white-space:nowrap;">-1</div>
<div class="a" style="left:20.8px;width:80px;text-align:center;top:99.0px;font-size:8.3px;line-height:10px;color:#c7c8d2;white-space:nowrap;letter-spacing:-0.3px">17:13</div>
<div class="a" style="left:74.1px;width:80px;text-align:center;top:99.0px;font-size:8.3px;line-height:10px;color:#c7c8d2;white-space:nowrap;letter-spacing:-0.3px">17:14</div>
<div class="a" style="left:127.4px;width:80px;text-align:center;top:99.0px;font-size:8.3px;line-height:10px;color:#c7c8d2;white-space:nowrap;letter-spacing:-0.3px">17:15</div>
<div class="a" style="left:180.7px;width:80px;text-align:center;top:99.0px;font-size:8.3px;line-height:10px;color:#c7c8d2;white-space:nowrap;letter-spacing:-0.3px">17:16</div>
<div class="a" style="left:234.0px;width:80px;text-align:center;top:99.0px;font-size:8.3px;line-height:10px;color:#c7c8d2;white-space:nowrap;letter-spacing:-0.3px">17:17</div>
<div class="a" style="left:125.0px;width:80px;text-align:center;top:43.0px;font-size:10.3px;line-height:10px;color:#d8d9e0;white-space:nowrap;">No data</div>
<div class="a" style="left:-14px;top:62.5px;width:50px;text-align:center;transform:rotate(-90deg);font-size:8.2px;line-height:10px;color:#c7c8d2">pods</div>
</div>
<div class="panel" style="left:349px;top:219px;width:332px;height:120px;">
<div class="ptitle" style="letter-spacing:0.17px">Cluster CPU Capacity</div>
<svg class="a" style="left:114px;top:5px" width="11" height="10" viewBox="0 0 11 10"><path d="M5.5 .8 L10.3 9.3 H.7Z" fill="none" stroke="#e6a23c" stroke-width="1.1" stroke-linejoin="round"/><path d="M5.5 3.6 V6.3" stroke="#e6a23c" stroke-width="1.1"/><circle cx="5.5" cy="7.7" r=".6" fill="#e6a23c"/></svg>
<div class="a" style="left:48.5px;top:32.8px;width:266.5px;height:1px;background:#2b2d32"></div>
<div class="a" style="left:48.5px;top:47.6px;width:266.5px;height:1px;background:#2b2d32"></div>
<div class="a" style="left:48.5px;top:63.1px;width:266.5px;height:1px;background:#2b2d32"></div>
<div class="a" style="left:48.5px;top:78.4px;width:266.5px;height:1px;background:#2b2d32"></div>
<div class="a" style="left:48.5px;top:93.9px;width:266.5px;height:1px;background:#2b2d32"></div>
<div class="a" style="left:60.3px;top:32.8px;width:1px;height:62.1px;background:#2b2d32"></div>
<div class="a" style="left:113.6px;top:32.8px;width:1px;height:62.1px;background:#2b2d32"></div>
<div class="a" style="left:166.9px;top:32.8px;width:1px;height:62.1px;background:#2b2d32"></div>
<div class="a" style="left:220.2px;top:32.8px;width:1px;height:62.1px;background:#2b2d32"></div>
<div class="a" style="left:273.5px;top:32.8px;width:1px;height:62.1px;background:#2b2d32"></div>
<div class="a" style="left:-155.5px;width:200px;text-align:right;top:28.3px;font-size:8.6px;line-height:10px;color:#c7c8d2;white-space:nowrap;">1</div>
<div class="a" style="left:-155.5px;width:200px;text-align:right;top:43.1px;font-size:8.6px;line-height:10px;color:#c7c8d2;white-space:nowrap;">0.500</div>
<div class="a" style="left:-155.5px;width:200px;text-align:right;top:58.6px;font-size:8.6px;line-height:10px;color:#c7c8d2;white-space:nowrap;">0</div>
<div class="a" style="left:-155.5px;width:200px;text-align:right;top:73.9px;font-size:8.6px;line-height:10px;color:#c7c8d2;white-space:nowrap;">-0.500</div>
<div class="a" style="left:-155.5px;width:200px;text-align:right;top:89.4px;font-size:8.6px;line-height:10px;color:#c7c8d2;white-space:nowrap;">-1</div>
<div class="a" style="left:20.8px;width:80px;text-align:center;top:99.0px;font-size:8.3px;line-height:10px;color:#c7c8d2;white-space:nowrap;letter-spacing:-0.3px">17:13</div>
<div class="a" style="left:74.1px;width:80px;text-align:center;top:99.0px;font-size:8.3px;line-height:10px;color:#c7c8d2;white-space:nowrap;letter-spacing:-0.3px">17:14</div>
<div class="a" style="left:127.4px;width:80px;text-align:center;top:99.0px;font-size:8.3px;line-height:10px;color:#c7c8d2;white-space:nowrap;letter-spacing:-0.3px">17:15</div>
<div class="a" style="left:180.7px;width:80px;text-align:center;top:99.0px;font-size:8.3px;line-height:10px;color:#c7c8d2;white-space:nowrap;letter-spacing:-0.3px">17:16</div>
<div class="a" style="left:234.0px;width:80px;text-align:center;top:99.0px;font-size:8.3px;line-height:10px;color:#c7c8d2;white-space:nowrap;letter-spacing:-0.3px">17:17</div>
<div class="a" style="left:125.0px;width:80px;text-align:center;top:43.0px;font-size:10.3px;line-height:10px;color:#d8d9e0;white-space:nowrap;">No data</div>
<div class="a" style="left:-14px;top:62.5px;width:50px;text-align:center;transform:rotate(-90deg);font-size:8.2px;line-height:10px;color:#c7c8d2">cores</div>
</div>
<div class="panel" style="left:687px;top:219px;width:331px;height:120px;">
<div class="ptitle">Cluster Mem Capacity</div>
<svg class="a" style="left:116px;top:5px" width="11" height="10" viewBox="0 0 11 10"><path d="M5.5 .8 L10.3 9.3 H.7Z" fill="none" stroke="#e6a23c" stroke-width="1.1" stroke-linejoin="round"/><path d="M5.5 3.6 V6.3" stroke="#e6a23c" stroke-width="1.1"/><circle cx="5.5" cy="7.7" r=".6" fill="#e6a23c"/></svg>
<div class="a" style="left:41.5px;top:32.8px;width:273.1px;height:1px;background:#2b2d32"></div>
<div class="a" style="left:41.5px;top:47.6px;width:273.1px;height:1px;background:#2b2d32"></div>
<div class="a" style="left:41.5px;top:63.1px;width:273.1px;height:1px;background:#2b2d32"></div>
<div class="a" style="left:41.5px;top:78.4px;width:273.1px;height:1px;background:#2b2d32"></div>
<div class="a" style="left:41.5px;top:93.9px;width:273.1px;height:1px;background:#2b2d32"></div>
<div class="a" style="left:54.2px;top:32.8px;width:1px;height:62.1px;background:#2b2d32"></div>
<div class="a" style="left:108.6px;top:32.8px;width:1px;height:62.1px;background:#2b2d32"></div>
<div class="a" style="left:163.0px;top:32.8px;width:1px;height:62.1px;background:#2b2d32"></div>
<div class="a" style="left:217.4px;top:32.8px;width:1px;height:62.1px;background:#2b2d32"></div>
<div class="a" style="left:271.8px;top:32.8px;width:1px;height:62.1px;background:#2b2d32"></div>
<div class="a" style="left:-162.0px;width:200px;text-align:right;top:28.3px;font-size:8.6px;line-height:10px;color:#c7c8d2;white-space:nowrap;">1 B</div>
<div class="a" style="left:-162.0px;width:200px;text-align:right;top:43.1px;font-size:8.6px;line-height:10px;color:#c7c8d2;white-space:nowrap;">500 mB</div>
<div class="a" style="left:-162.0px;width:200px;text-align:right;top:58.6px;font-size:8.6px;line-height:10px;color:#c7c8d2;white-space:nowrap;">0 B</div>
<div class="a" style="left:-162.0px;width:200px;text-align:right;top:73.9px;font-size:8.6px;line-height:10px;color:#c7c8d2;white-space:nowrap;">-500 mB</div>
<div class="a" style="left:-162.0px;width:200px;text-align:right;top:89.4px;font-size:8.6px;line-height:10px;color:#c7c8d2;white-space:nowrap;">-1 B</div>
<div class="a" style="left:14.7px;width:80px;text-align:center;top:99.0px;font-size:8.3px;line-height:10px;color:#c7c8d2;white-space:nowrap;letter-spacing:-0.3px">17:13</div>
<div class="a" style="left:69.1px;width:80px;text-align:center;top:99.0px;font-size:8.3px;line-height:10px;color:#c7c8d2;white-space:nowrap;letter-spacing:-0.3px">17:14</div>
<div class="a" style="left:123.5px;width:80px;text-align:center;top:99.0px;font-size:8.3px;line-height:10px;color:#c7c8d2;white-space:nowrap;letter-spacing:-0.3px">17:15</div>
<div class="a" style="left:177.9px;width:80px;text-align:center;top:99.0px;font-size:8.3px;line-height:10px;color:#c7c8d2;white-space:nowrap;letter-spacing:-0.3px">17:16</div>
<div class="a" style="left:232.3px;width:80px;text-align:center;top:99.0px;font-size:8.3px;line-height:10px;color:#c7c8d2;white-space:nowrap;letter-spacing:-0.3px">17:17</div>
<div class="a" style="left:124.5px;width:80px;text-align:center;top:43.0px;font-size:10.3px;line-height:10px;color:#d8d9e0;white-space:nowrap;">No data</div>
</div>
<div class="panel" style="left:1024px;top:219px;width:332px;height:120px;">
<div class="ptitle">Cluster Disk Capacity</div>
<svg class="a" style="left:114px;top:5px" width="11" height="10" viewBox="0 0 11 10"><path d="M5.5 .8 L10.3 9.3 H.7Z" fill="none" stroke="#e6a23c" stroke-width="1.1" stroke-linejoin="round"/><path d="M5.5 3.6 V6.3" stroke="#e6a23c" stroke-width="1.1"/><circle cx="5.5" cy="7.7" r=".6" fill="#e6a23c"/></svg>
<div class="a" style="left:37.6px;top:32.6px;width:278.0px;height:1px;background:#2b2d32"></div>
<div class="a" style="left:37.6px;top:48.3px;width:278.0px;height:1px;background:#2b2d32"></div>
<div class="a" style="left:37.6px;top:64.2px;width:278.0px;height:1px;background:#2b2d32"></div>
<div class="a" style="left:37.6px;top:79.8px;width:278.0px;height:1px;background:#2b2d32"></div>
<div class="a" style="left:50.3px;top:32.6px;width:1px;height:48.2px;background:#2b2d32"></div>
<div class="a" style="left:105.7px;top:32.6px;width:1px;height:48.2px;background:#2b2d32"></div>
<div class="a" style="left:161.2px;top:32.6px;width:1px;height:48.2px;background:#2b2d32"></div>
<div class="a" style="left:216.6px;top:32.6px;width:1px;height:48.2px;background:#2b2d32"></div>
<div class="a" style="left:272.1px;top:32.6px;width:1px;height:48.2px;background:#2b2d32"></div>
<div class="a" style="left:37.6px;top:38.5px;width:275.9px;height:41.5px;background:rgba(215,160,64,0.12)"></div>
<div class="a" style="left:37.6px;top:76.5px;width:275.9px;height:3.5px;background:rgba(110,150,80,0.22)"></div>
<div class="a" style="left:37.6px;top:37.5px;width:275.9px;height:1.3px;background:#c09a38"></div>
<div class="a" style="left:37.6px;top:76.0px;width:275.9px;height:2px;background:#627f4b"></div>
<div class="a" style="left:-165.2px;width:200px;text-align:right;top:28.1px;font-size:8.6px;line-height:10px;color:#c7c8d2;white-space:nowrap;">300 GB</div>
<div class="a" style="left:-165.2px;width:200px;text-align:right;top:43.8px;font-size:8.6px;line-height:10px;color:#c7c8d2;white-space:nowrap;">200 GB</div>
<div class="a" style="left:-165.2px;width:200px;text-align:right;top:59.7px;font-size:8.6px;line-height:10px;color:#c7c8d2;white-space:nowrap;">100 GB</div>
<div class="a" style="left:-165.2px;width:200px;text-align:right;top:75.3px;font-size:8.6px;line-height:10px;color:#c7c8d2;white-space:nowrap;">0 B</div>
<div class="a" style="left:10.8px;width:80px;text-align:center;top:85.0px;font-size:8.3px;line-height:10px;color:#c7c8d2;white-space:nowrap;letter-spacing:-0.3px">17:13</div>
<div class="a" style="left:66.2px;width:80px;text-align:center;top:85.0px;font-size:8.3px;line-height:10px;color:#c7c8d2;white-space:nowrap;letter-spacing:-0.3px">17:14</div>
<div class="a" style="left:121.7px;width:80px;text-align:center;top:85.0px;font-size:8.3px;line-height:10px;color:#c7c8d2;white-space:nowrap;letter-spacing:-0.3px">17:15</div>
<div class="a" style="left:177.1px;width:80px;text-align:center;top:85.0px;font-size:8.3px;line-height:10px;color:#c7c8d2;white-space:nowrap;letter-spacing:-0.3px">17:16</div>
<div class="a" style="left:232.6px;width:80px;text-align:center;top:85.0px;font-size:8.3px;line-height:10px;color:#c7c8d2;white-space:nowrap;letter-spacing:-0.3px">17:17</div>
<div class="a" style="left:12.5px;top:106px;width:9px;height:3px;border-radius:2px;background:#73bf69"></div>
<div class="a" style="left:30.8px;top:102.3px;font-size:9px;line-height:10px;color:#c7c8d2;white-space:nowrap;">usage</div>
<div class="a" style="left:64.5px;top:106px;width:9px;height:3px;border-radius:2px;background:#f0c53a"></div>
<div class="a" style="left:83.4px;top:102.3px;font-size:9px;line-height:10px;color:#c7c8d2;white-space:nowrap;">limit</div>
</div>
<svg class="a" style="left:17.5px;top:353px" width="5" height="4" viewBox="0 0 5 4"><path d="M.5 .8 L2.5 2.8 L4.5 .8" fill="none" stroke="#ccccdc" stroke-width="1"/></svg>
<div class="rowt" style="top:346.4px">Deployments</div>
<div class="panel" style="left:11px;top:371px;width:332px;height:120px;">
<div class="ptitle">Deployment Replicas - Up To Date</div>
<svg class="a" style="left:171px;top:5px" width="11" height="10" viewBox="0 0 11 10"><path d="M5.5 .8 L10.3 9.3 H.7Z" fill="none" stroke="#e6a23c" stroke-width="1.1" stroke-linejoin="round"/><path d="M5.5 3.6 V6.3" stroke="#e6a23c" stroke-width="1.1"/><circle cx="5.5" cy="7.7" r=".6" fill="#e6a23c"/></svg>
<div class="a" style="left:0;top:22px;width:332px;height:17px;background:#212329"></div>
<div class="a" style="left:0;top:39px;width:332px;height:3px;background:#111217"></div>
<div class="a" style="left:10.0px;top:26.2px;font-size:10px;line-height:10px;color:#4493f8;white-space:nowrap;-webkit-text-stroke:0.25px #4493f8">Time</div>
<div class="a" style="left:114.0px;top:26.2px;font-size:10px;line-height:10px;color:#4493f8;white-space:nowrap;-webkit-text-stroke:0.25px #4493f8">Metric</div>
<svg class="a" style="left:148px;top:29.5px" width="6" height="4" viewBox="0 0 6 4"><path d="M.6 .7 L3 3 L5.4 .7" fill="none" stroke="#4493f8" stroke-width="1"/></svg>
<div class="a" style="left:289.0px;top:26.2px;font-size:10px;line-height:10px;color:#4493f8;white-space:nowrap;-webkit-text-stroke:0.25px #4493f8">Value</div>
<div class="a" style="left:0px;top:42.0px;width:104px;height:36.5px;background:#33a530"></div>
<div class="a" style="left:105px;top:42.0px;width:174px;height:36.5px;background:#33a530"></div>
<div class="a" style="left:280px;top:42.0px;width:45px;height:36.5px;background:#33a530"></div>
<div class="a" style="left:10.0px;top:48.2px;font-size:10.3px;line-height:10px;color:#fff;white-space:nowrap;-webkit-text-stroke:0.3px #fff">2024-03-27</div>
<div class="a" style="left:10.0px;top:62.2px;font-size:10.3px;line-height:10px;color:#fff;white-space:nowrap;-webkit-text-stroke:0.3px #fff">17:17:46</div>
<div class="a" style="left:115.0px;top:55.2px;font-size:10.3px;line-height:10px;color:#fff;white-space:nowrap;-webkit-text-stroke:0.3px #fff">youtube-clone-app</div>
<div class="a" style="left:291.0px;top:55.2px;font-size:10.3px;line-height:10px;color:#fff;white-space:nowrap;-webkit-text-stroke:0.3px #fff">2</div>
<div class="a" style="left:0px;top:79.5px;width:104px;height:38.0px;background:#33a530"></div>
<div class="a" style="left:105px;top:79.5px;width:174px;height:38.0px;background:#33a530"></div>
<div class="a" style="left:280px;top:79.5px;width:45px;height:38.0px;background:#33a530"></div>
<div class="a" style="left:10.0px;top:86.5px;font-size:10.3px;line-height:10px;color:#fff;white-space:nowrap;-webkit-text-stroke:0.3px #fff">2024-03-27</div>
<div class="a" style="left:10.0px;top:100.5px;font-size:10.3px;line-height:10px;color:#fff;white-space:nowrap;-webkit-text-stroke:0.3px #fff">17:17:46</div>
<div class="a" style="left:115.0px;top:93.5px;font-size:10.3px;line-height:10px;color:#fff;white-space:nowrap;-webkit-text-stroke:0.3px #fff">stable-kube-state-metrics</div>
<div class="a" style="left:291.0px;top:93.5px;font-size:10.3px;line-height:10px;color:#fff;white-space:nowrap;-webkit-text-stroke:0.3px #fff">1</div>
<div class="a" style="left:0px;top:118.5px;width:104px;height:29.5px;background:#33a530"></div>
<div class="a" style="left:105px;top:118.5px;width:174px;height:29.5px;background:#33a530"></div>
<div class="a" style="left:280px;top:118.5px;width:45px;height:29.5px;background:#33a530"></div>
<div class="a" style="left:325px;top:42px;width:4px;height:77px;background:#181b1f"></div>
<div class="a" style="left:325px;top:43px;width:4px;height:33px;background:#4b4c56;border:1px solid #0c0d10"></div>
</div>
<div class="panel" style="left:349px;top:371px;width:332px;height:120px;">
<div class="ptitle" style="letter-spacing:0.17px">Deployment Replicas</div>
<svg class="a" style="left:0;top:0" width="332" height="119"><path d="M147.55 44.70 L182.45 44.70 L182.45 51.75 L160.55 95.20 L151.75 95.20 L173.55 51.75 L147.55 51.75Z" fill="#d0d0de"/></svg>
</div>
<div class="panel" style="left:687px;top:371px;width:331px;height:120px;">
<div class="ptitle">Deployment Replicas - Updated</div>
<svg class="a" style="left:0;top:0" width="332" height="119"><path d="M147.05 44.70 L181.95 44.70 L181.95 51.75 L160.05 95.20 L151.25 95.20 L173.05 51.75 L147.05 51.75Z" fill="#d0d0de"/></svg>
</div>
<div class="panel" style="left:1024px;top:371px;width:332px;height:120px;">
<div class="ptitle">Deployment Replicas - Unavailable</div>
<svg class="a" style="left:0;top:0" width="332" height="119"><path fill-rule="evenodd" d="M146.70 69.90 a18.85 26.3 0 1 0 37.7 0 a18.85 26.3 0 1 0 -37.7 0Z M155.00 69.80 a10.6 19.1 0 1 0 21.2 0 a10.6 19.1 0 1 0 -21.2 0Z" fill="#d0d0de"/></svg>
</div>
<svg class="a" style="left:17.5px;top:505px" width="5" height="4" viewBox="0 0 5 4"><path d="M.5 .8 L2.5 2.8 L4.5 .8" fill="none" stroke="#ccccdc" stroke-width="1"/></svg>
<div class="rowt" style="top:498.4px">POD CPU Usage</div>
<div class="panel" style="left:11px;top:523px;width:1345px;height:117px;">
<div class="ptitle" style="letter-spacing:-0.1px">POD CPU Usage</div>
<svg class="a" style="left:89px;top:5px" width="11" height="10" viewBox="0 0 11 10"><path d="M5.5 .8 L10.3 9.3 H.7Z" fill="none" stroke="#e6a23c" stroke-width="1.1" stroke-linejoin="round"/><path d="M5.5 3.6 V6.3" stroke="#e6a23c" stroke-width="1.1"/><circle cx="5.5" cy="7.7" r=".6" fill="#e6a23c"/></svg>
<div class="a" style="left:42.3px;top:32.6px;width:1210.2px;height:1px;background:#2b2d32"></div>
<div class="a" style="left:42.3px;top:67.4px;width:1210.2px;height:1px;background:#2b2d32"></div>
<div class="a" style="left:55.2px;top:32.6px;width:1px;height:63.4px;background:#2b2d32"></div>
<div class="a" style="left:95.6px;top:32.6px;width:1px;height:63.4px;background:#2b2d32"></div>
<div class="a" style="left:135.9px;top:32.6px;width:1px;height:63.4px;background:#2b2d32"></div>
<div class="a" style="left:176.3px;top:32.6px;width:1px;height:63.4px;background:#2b2d32"></div>
<div class="a" style="left:216.7px;top:32.6px;width:1px;height:63.4px;background:#2b2d32"></div>
<div class="a" style="left:257.1px;top:32.6px;width:1px;height:63.4px;background:#2b2d32"></div>
<div class="a" style="left:297.4px;top:32.6px;width:1px;height:63.4px;background:#2b2d32"></div>
<div class="a" style="left:337.8px;top:32.6px;width:1px;height:63.4px;background:#2b2d32"></div>
<div class="a" style="left:378.2px;top:32.6px;width:1px;height:63.4px;background:#2b2d32"></div>
<div class="a" style="left:418.5px;top:32.6px;width:1px;height:63.4px;background:#2b2d32"></div>
<div class="a" style="left:458.9px;top:32.6px;width:1px;height:63.4px;background:#2b2d32"></div>
<div class="a" style="left:499.3px;top:32.6px;width:1px;height:63.4px;background:#2b2d32"></div>
<div class="a" style="left:539.6px;top:32.6px;width:1px;height:63.4px;background:#2b2d32"></div>
<div class="a" style="left:580.0px;top:32.6px;width:1px;height:63.4px;background:#2b2d32"></div>
<div class="a" style="left:620.4px;top:32.6px;width:1px;height:63.4px;background:#2b2d32"></div>
<div class="a" style="left:660.8px;top:32.6px;width:1px;height:63.4px;background:#2b2d32"></div>
<div class="a" style="left:701.1px;top:32.6px;width:1px;height:63.4px;background:#2b2d32"></div>
<div class="a" style="left:741.5px;top:32.6px;width:1px;height:63.4px;background:#2b2d32"></div>
<div class="a" style="left:781.9px;top:32.6px;width:1px;height:63.4px;background:#2b2d32"></div>
<div class="a" style="left:822.2px;top:32.6px;width:1px;height:63.4px;background:#2b2d32"></div>
<div class="a" style="left:862.6px;top:32.6px;width:1px;height:63.4px;background:#2b2d32"></div>
<div class="a" style="left:903.0px;top:32.6px;width:1px;height:63.4px;background:#2b2d32"></div>
<div class="a" style="left:943.3px;top:32.6px;width:1px;height:63.4px;background:#2b2d32"></div>
<div class="a" style="left:983.7px;top:32.6px;width:1px;height:63.4px;background:#2b2d32"></div>
<div class="a" style="left:1024.1px;top:32.6px;width:1px;height:63.4px;background:#2b2d32"></div>
<div class="a" style="left:1064.4px;top:32.6px;width:1px;height:63.4px;background:#2b2d32"></div>
<div class="a" style="left:1104.8px;top:32.6px;width:1px;height:63.4px;background:#2b2d32"></div>
<div class="a" style="left:1145.2px;top:32.6px;width:1px;height:63.4px;background:#2b2d32"></div>
<div class="a" style="left:1185.6px;top:32.6px;width:1px;height:63.4px;background:#2b2d32"></div>
<div class="a" style="left:1225.9px;top:32.6px;width:1px;height:63.4px;background:#2b2d32"></div>
<div class="a" style="left:-162.0px;width:200px;text-align:right;top:28.5px;font-size:8.6px;line-height:10px;color:#c7c8d2;white-space:nowrap;">1%</div>
<div class="a" style="left:-161.0px;width:200px;text-align:right;top:63.5px;font-size:8.6px;line-height:10px;color:#c7c8d2;white-space:nowrap;">0.500%</div>
<div class="a" style="left:597.0px;width:80px;text-align:center;top:82.5px;font-size:10.3px;line-height:10px;color:#d8d9e0;white-space:nowrap;">No data</div>
<div class="a" style="left:1278.5px;top:31.5px;font-size:9px;line-height:10px;color:#3b91f5;white-space:nowrap;-webkit-text-stroke:0.3px #3b91f5">avg</div>
<div class="a" style="left:1299.5px;top:31.5px;font-size:9px;line-height:10px;color:#3b91f5;white-space:nowrap;-webkit-text-stroke:0.3px #3b91f5">current</div>
</div></div>
<div id="task"><svg class="a" style="left:10px;top:7px" width="16" height="16" viewBox="0 0 16 16"><path d="M0 2.2 L6.8 1.2 V7.6 H0Z M7.8 1.05 L16 0 V7.6 H7.8Z M0 8.5 H6.8 V14.8 L0 13.8Z M7.8 8.5 H16 V16 L7.8 14.9Z" fill="#fff"/></svg>
<svg class="a" style="left:45px;top:7px" width="17" height="16" viewBox="0 0 17 16"><rect x="1" y="3" width="10" height="9" fill="none" stroke="#fff" stroke-width="1.2"/><path d="M0 .8 H12 M0 14.8 H12 M14.5 1 V3 M14.5 5 V11 M14.5 13 V15" stroke="#fff" stroke-width="1.2"/></svg>
<svg class="a" style="left:82px;top:6px" width="18" height="17" viewBox="0 0 18 17"><text x="9" y="11.5" text-anchor="middle" font-family="Liberation Sans" font-weight="bold" font-size="15" fill="#000">a</text><path d="M1.5 12.3 Q9 16.8 16 12.3" fill="none" stroke="#f29a1f" stroke-width="1.4"/><path d="M14 11.6 L16.6 12 L15.8 14.4" fill="none" stroke="#f29a1f" stroke-width="1.1"/></svg>
<svg class="a" style="left:112px;top:7px" width="16" height="16" viewBox="0 0 16 16"><circle cx="8" cy="8" r="8" fill="#1877f2"/><path d="M9 16 V9.8 H11 L11.3 7.6 H9 V6.3 Q9 5.2 10.2 5.2 H11.4 V3.3 Q10.6 3.1 9.7 3.1 Q6.8 3.1 6.8 6 V7.6 H4.8 V9.8 H6.8 V16Z" fill="#fff"/></svg>
<svg class="a" style="left:141px;top:7px" width="16" height="16" viewBox="0 0 16 16"><path d="M8 .5 L14.5 4.2 V11.8 L8 15.5 L1.5 11.8 V4.2Z" fill="#7b6fe0"/><path d="M8 .5 L14.5 4.2 V9 L11 7 Z" fill="#2f9ff0"/><path d="M1.5 4.2 L8 .5 L6 4 L4.5 11 L1.5 11.8Z" fill="#a07ae8"/><path d="M1.5 11.8 L8 15.5 L14.5 11.8 L11 9 L6 12Z" fill="#b987e6"/><path d="M6 5.5 L10.5 7 L9.5 11 L5.5 10Z" fill="#1f201f"/></svg>
<svg class="a" style="left:169px;top:6px" width="18" height="18" viewBox="0 0 18 18"><defs><linearGradient id="ffg" x1="0" y1="1" x2=".6" y2="0"><stop offset="0" stop-color="#ff3750"/><stop offset=".6" stop-color="#ff7a1a"/><stop offset="1" stop-color="#ffc02b"/></linearGradient></defs><circle cx="9" cy="10" r="7.6" fill="url(#ffg)"/><path d="M12 1 Q17.5 5 16.6 10 Q15 5 11 4.5Z" fill="#ffc02b"/><circle cx="8.3" cy="9.2" r="3.6" fill="#7c3ce0"/><path d="M4 6 Q7 4.5 10 6.5 Q7 6 5.5 8Z" fill="#ff8a1a"/></svg>
<svg class="a" style="left:198px;top:7px" width="17" height="16" viewBox="0 0 17 16"><path d="M5 1 L13 2 L12 6 L4 5Z" fill="#eee"/><path d="M1 7 L14 6 L16 9 L16 12 L3 13 L1 11Z" fill="#a0a0a0"/><path d="M3 13 L16 12 L16 9 L3 10Z" fill="#6a6a6a"/><rect x="5" y="11" width="7" height="2" fill="#3a7bd5"/></svg>
<svg class="a" style="left:226px;top:6px" width="16" height="17" viewBox="0 0 16 17"><rect x="2" y="2" width="13" height="14" fill="#cfe3f5" stroke="#7a98b8" stroke-width=".8"/><path d="M4 5.5 H13 M4 8 H13 M4 10.5 H13 M4 13 H11" stroke="#7a98b8" stroke-width=".8"/><path d="M3 .5 V3 M5 .5 V3 M7 .5 V3 M9 .5 V3 M11 .5 V3 M13 .5 V3" stroke="#555" stroke-width=".8"/></svg>
<div class="a" style="left:246px;top:9px;font-size:11.5px;line-height:14px;color:#fff;white-space:nowrap">*U...</div>
<div class="a" style="left:226px;top:28px;width:43px;height:2px;background:#76b9ed"></div>
<svg class="a" style="left:279px;top:7px" width="17" height="16" viewBox="0 0 17 16"><path d="M12.5 .5 L16.5 2.3 V13.7 L12.5 15.5 L5 8.7 L2 11 L.5 10.2 V5.8 L2 5 L5 7.3Z M12.5 4.5 L8 8 L12.5 11.5Z M2 6.5 V9.5 L3.8 8Z" fill="#2a9ff0" fill-rule="evenodd"/></svg>
<svg class="a" style="left:309px;top:7px" width="16" height="16" viewBox="0 0 16 16"><circle cx="8" cy="8.5" r="7" fill="#ff5a1f"/><circle cx="8.5" cy="9" r="4.5" fill="#2d8cf0"/><path d="M3 5 Q6 0 11 2 Q8 2 7 4Z" fill="#ffbd2e"/></svg>
<svg class="a" style="left:337px;top:7px" width="17" height="16" viewBox="0 0 17 16"><rect x=".7" y="1.2" width="15.6" height="13.6" rx="2" fill="#0c0c0c" stroke="#c561a8" stroke-width="1"/><path d="M3.5 5 L5.5 6.5 L3.5 8" fill="none" stroke="#fff" stroke-width=".9"/><path d="M6 8.3 H8.5" stroke="#fff" stroke-width=".9"/></svg>
<svg class="a" style="left:365px;top:7px" width="16" height="16" viewBox="0 0 16 16"><path d="M8 8 L1.07 4 A8 8 0 0 1 14.93 4 Z" fill="#ea4335"/><path d="M8 8 L14.93 4 A8 8 0 0 1 8 16 Z" fill="#fbbc04"/><path d="M8 8 L8 16 A8 8 0 0 1 1.07 4 Z" fill="#34a853"/><circle cx="8" cy="8" r="3.8" fill="#fff"/><circle cx="8" cy="8" r="3" fill="#4285f4"/><circle cx="13" cy="13" r="3" fill="#222"/><circle cx="13" cy="12" r="1" fill="#ddd"/></svg>
<div class="a" style="left:385px;top:9px;font-size:11.5px;line-height:14px;color:#fff;white-space:nowrap">C...</div>
<div class="a" style="left:365px;top:28px;width:43px;height:2px;background:#76b9ed"></div>
<svg class="a" style="left:417px;top:7px" width="17" height="16" viewBox="0 0 17 16"><path d="M.5 2.5 H6 L7.5 4 H16.5 V14.5 H.5Z" fill="#f4c04a"/><path d="M.5 5.5 H16.5 V14.5 H.5Z" fill="#ffd96a"/><path d="M6 9 H11 V14.5 H6Z" fill="#1e88e5"/><path d="M7.5 11 H9.5 V14.5 H7.5Z" fill="#ffd96a"/></svg>
<div class="a" style="left:437px;top:9px;font-size:11.5px;line-height:14px;color:#fff;white-space:nowrap">Fil...</div>
<div class="a" style="left:417px;top:28px;width:34px;height:2px;background:#76b9ed"></div>
<div class="a" style="left:452px;top:28px;width:9px;height:2px;background:#76b9ed"></div>
<svg class="a" style="left:473px;top:7px" width="13" height="14" viewBox="0 0 13 14"><rect width="13" height="14" fill="#f5d800"/><path d="M5 4 V9 H8 M6 9 V11" stroke="#222" stroke-width="1"/></svg>
<svg class="a" style="left:500px;top:6px" width="16" height="16" viewBox="0 0 16 16"><circle cx="8" cy="8" r="7.5" fill="#8a44c7"/><circle cx="8" cy="8" r="5" fill="#fff"/><path fill="#8a44c7" d="M8 4.2c-2.1 0-3.8 1.7-3.8 3.8 0 1.7 1.1 3.1 2.6 3.6.2 0 .3-.1.3-.2v-.7c-1 .2-1.3-.4-1.3-.4-.2-.4-.4-.5-.4-.5-.3-.2 0-.2 0-.2.4 0 .6.4.6.4.3.6.9.4 1.100.3 0-.2.1-.4.3-.5-.8-.1-1.7-.4-1.7-1.9 0-.4.1-.8.4-1 0-.1-.2-.5 0-1 0 0 .3-.1 1 .4.6-.2 1.3-.2 1.900 0 .7-.5 1-.4 1-.4.2.5.1.9 0 1 .3.3.4.6.4 1 0 1.5-.9 1.8-1.7 1.9.1.1.3.4.3.7v1c0 .1.1.2.3.2 1.5-.5 2.6-1.9 2.6-3.6 0-2.1-1.7-3.8-3.8-3.8z"/></svg>
<svg class="a" style="left:530px;top:6px" width="13" height="16" viewBox="0 0 13 16"><rect width="13" height="16" rx="1" fill="#fff"/><rect x="2" y="2" width="9" height="3" fill="#333"/><g fill="#333"><rect x="2" y="7" width="2" height="1.6"/><rect x="5.5" y="7" width="2" height="1.6"/><rect x="9" y="7" width="2" height="1.6"/><rect x="2" y="10" width="2" height="1.6"/><rect x="5.5" y="10" width="2" height="1.6"/><rect x="9" y="10" width="2" height="1.6"/><rect x="2" y="13" width="2" height="1.6"/><rect x="5.5" y="13" width="2" height="1.6"/><rect x="9" y="13" width="2" height="1.6"/></g></svg>
<svg class="a" style="left:559px;top:7px" width="15" height="15" viewBox="0 0 15 15"><circle cx="7.5" cy="7.5" r="6.8" fill="#1b2340" stroke="#8e9ad0" stroke-width="1"/><path d="M4.5 8 Q7.5 4 10.5 7 Q8 10 4.5 8Z" fill="none" stroke="#9aa6e0" stroke-width="1"/></svg>
<svg class="a" style="left:585px;top:7px" width="16" height="16" viewBox="0 0 16 16"><path d="M8 8 L1.07 4 A8 8 0 0 1 14.93 4 Z" fill="#ea4335"/><path d="M8 8 L14.93 4 A8 8 0 0 1 8 16 Z" fill="#fbbc04"/><path d="M8 8 L8 16 A8 8 0 0 1 1.07 4 Z" fill="#34a853"/><circle cx="8" cy="8" r="3.8" fill="#fff"/><circle cx="8" cy="8" r="3" fill="#4285f4"/><circle cx="13" cy="13" r="2.6" fill="#e8c050"/><circle cx="12" cy="14" r="1.5" fill="#5a9a40"/></svg>
<div class="a" style="left:605px;top:9px;font-size:11.5px;line-height:14px;color:#fff;white-space:nowrap">K...</div>
<div class="a" style="left:585px;top:28px;width:42px;height:2px;background:#76b9ed"></div>
<svg class="a" style="left:636px;top:6px" width="17" height="17" viewBox="0 0 17 17"><path d="M8.5 .5 L12.5 4.5 L8.5 8.5 L4.5 4.5Z" fill="#e06060"/><path d="M12.5 4.5 L16.5 8.5 L12.5 12.5 L8.5 8.5Z" fill="#6cb04c"/><path d="M8.5 8.5 L12.5 12.5 L8.5 16.5 L4.5 12.5Z" fill="#e8d870"/><path d="M4.5 4.5 L8.5 8.5 L4.5 12.5 L.5 8.5Z" fill="#6aa8e8"/><circle cx="8.5" cy="8.5" r="1.6" fill="#333"/><path d="M6 3 L11 14" stroke="#333" stroke-width="1"/></svg>
<div class="a" style="left:656px;top:9px;font-size:11.5px;line-height:14px;color:#fff;white-space:nowrap">u...</div>
<div class="a" style="left:636px;top:28px;width:42px;height:2px;background:#76b9ed"></div>
<svg class="a" style="left:689px;top:7px" width="16" height="16" viewBox="0 0 16 16"><rect x="1" y="1" width="15" height="15" rx="3" fill="#2aa6e0"/><rect x="0" y="0" width="14" height="14" rx="3" fill="#4fc3f7"/><path d="M3.5 4.5 H10.5 M3.5 7 H10.5 M3.5 9.5 H10.5" stroke="#fff" stroke-width="1.2"/></svg>
<svg class="a" style="left:716px;top:7px" width="16" height="16" viewBox="0 0 16 16"><rect width="16" height="16" rx="1" fill="#bf0000"/><text x="8" y="13" text-anchor="middle" font-family="Liberation Sans" font-style="italic" font-weight="bold" font-size="13" fill="#fff">Fz</text></svg>
<div class="a" style="left:736px;top:9px;font-size:11.5px;line-height:14px;color:#fff;white-space:nowrap">Fil...</div>
<div class="a" style="left:716px;top:28px;width:42px;height:2px;background:#76b9ed"></div>
<svg class="a" style="left:767px;top:6px" width="16" height="17" viewBox="0 0 16 17"><rect x="2" y="2" width="13" height="14" fill="#cfe3f5" stroke="#7a98b8" stroke-width=".8"/><path d="M4 5.5 H13 M4 8 H13 M4 10.5 H13 M4 13 H11" stroke="#7a98b8" stroke-width=".8"/><path d="M3 .5 V3 M5 .5 V3 M7 .5 V3 M9 .5 V3 M11 .5 V3 M13 .5 V3" stroke="#555" stroke-width=".8"/></svg>
<div class="a" style="left:787px;top:9px;font-size:11.5px;line-height:14px;color:#fff;white-space:nowrap">N...</div>
<div class="a" style="left:767px;top:28px;width:34px;height:2px;background:#76b9ed"></div>
<div class="a" style="left:802px;top:28px;width:7px;height:2px;background:#5a8cb0"></div>
<svg class="a" style="left:817px;top:7px" width="17" height="17" viewBox="0 0 17 17"><defs><linearGradient id="ed" x1="0" y1="0" x2="1" y2="1"><stop offset="0" stop-color="#3bd16f"/><stop offset=".5" stop-color="#0d87d8"/><stop offset="1" stop-color="#0d5aa7"/></linearGradient></defs><circle cx="8.5" cy="8.5" r="8" fill="url(#ed)"/><path d="M5 9 Q5 5 9 5 Q13 5 13 9 H7 Q8 12 12 12" fill="none" stroke="#1f1f1f" stroke-width="1.6"/><circle cx="5" cy="13" r="3.2" fill="#fff"/><circle cx="5" cy="13" r="2" fill="#333"/></svg>
<div class="a" style="left:838px;top:9px;font-size:11.5px;line-height:14px;color:#fff;white-space:nowrap">N...</div>
<div class="a" style="left:818px;top:28px;width:42px;height:2px;background:#76b9ed"></div>
<svg class="a" style="left:869px;top:7px" width="16" height="16" viewBox="0 0 16 16"><rect x="5" y="1" width="11" height="14" rx="1" fill="#41a5ee"/><path d="M8 4 H14 M8 6.5 H14 M8 9 H14 M8 11.5 H14" stroke="#fff" stroke-width="1"/><rect x="0" y="3" width="10" height="10" rx="1" fill="#185abd"/><text x="5" y="11.3" text-anchor="middle" font-family="Liberation Sans" font-weight="bold" font-size="8.5" fill="#fff">W</text></svg>
<div class="a" style="left:889px;top:9px;font-size:11.5px;line-height:14px;color:#fff;white-space:nowrap">D...</div>
<div class="a" style="left:869px;top:28px;width:42px;height:2px;background:#76b9ed"></div>
<svg class="a" style="left:925px;top:10px" width="16" height="10" viewBox="0 0 16 10"><rect x=".7" y="1" width="13" height="8" fill="none" stroke="#fff" stroke-width="1.1"/><rect x="2.3" y="2.6" width="4.5" height="4.8" fill="#fff"/><rect x="14" y="3.2" width="1.6" height="3.6" fill="#fff"/></svg>
<svg class="a" style="left:956px;top:7px" width="17" height="17" viewBox="0 0 17 17"><circle cx="8.5" cy="8.5" r="7.6" fill="none" stroke="#fff" stroke-width="1.2"/><ellipse cx="8.5" cy="8.5" rx="3.5" ry="7.6" fill="none" stroke="#fff" stroke-width="1.1"/><path d="M1 6 H16 M1 11 H16 M8.5 1 V16" stroke="#fff" stroke-width="1.1"/></svg>
<div class="a" style="left:981px;top:1px;width:30px;height:29px;background:#3a3a3a"></div>
<svg class="a" style="left:988px;top:8px" width="15" height="15" viewBox="0 0 15 15"><path d="M7.5 0 V15 M0 7.5 H15" stroke="#fff" stroke-width="2.4"/></svg>
<svg class="a" style="left:1023px;top:6px" width="13" height="17" viewBox="0 0 13 17"><rect x="2" y="4.5" width="7" height="11" rx="1" fill="none" stroke="#fff" stroke-width="1"/><rect x="3" y=".8" width="5" height="3.7" fill="none" stroke="#fff" stroke-width="1"/><path d="M8 14 L10 16 L13 11" fill="none" stroke="#fff" stroke-width="1"/></svg>
<svg class="a" style="left:1054px;top:8px" width="14" height="14" viewBox="0 0 14 14"><path d="M1 13 A12 12 0 0 1 13 1 M3.5 13 A9.5 9.5 0 0 1 13 3.5 M6 13 A7 7 0 0 1 13 6 M8.5 13 A4.5 4.5 0 0 1 13 8.5" fill="none" stroke="#ddd" stroke-width="1.2"/><circle cx="12" cy="12" r="1.4" fill="#fff"/></svg>
<svg class="a" style="left:1084px;top:7px" width="16" height="16" viewBox="0 0 16 16"><path d="M0 0 H16 V12 L12 16 H0Z" fill="#f5d800"/><path d="M3.5 7.5 L6.5 10.5 L12.5 4.5" fill="none" stroke="#fff" stroke-width="1.8"/><path d="M12 16 V12 H16Z" fill="#fff"/></svg>
<svg class="a" style="left:1116px;top:7px" width="17" height="17" viewBox="0 0 17 17"><path d="M1 6 H4 L8 2 V14 L4 10 H1Z" fill="none" stroke="#fff" stroke-width="1.1"/><circle cx="12.5" cy="12" r="4.3" fill="#e81123"/><path d="M10.7 10.2 L14.3 13.8 M14.3 10.2 L10.7 13.8" stroke="#fff" stroke-width="1.1"/></svg>
<svg class="a" style="left:1148px;top:7px" width="16" height="16" viewBox="0 0 16 16"><path d="M8 8 L1.07 4 A8 8 0 0 1 14.93 4 Z" fill="#ea4335"/><path d="M8 8 L14.93 4 A8 8 0 0 1 8 16 Z" fill="#fbbc04"/><path d="M8 8 L8 16 A8 8 0 0 1 1.07 4 Z" fill="#34a853"/><circle cx="8" cy="8" r="3.8" fill="#fff"/><circle cx="8" cy="8" r="3" fill="#4285f4"/></svg>
<svg class="a" style="left:1180px;top:8px" width="16" height="14" viewBox="0 0 16 14"><rect x="0" y="0" width="16" height="14" fill="#2f6fe0"/><circle cx="7.5" cy="8" r="3.2" fill="none" stroke="#fff" stroke-width="1.3"/><rect x="12" y="2" width="2" height="1.5" fill="#fff"/></svg>
<svg class="a" style="left:1212px;top:7px" width="16" height="16" viewBox="0 0 16 16"><rect x="0" y="0" width="7" height="7" fill="#2f6fe0"/><rect x="9" y="0" width="7" height="7" fill="#2f6fe0"/><rect x="0" y="9" width="7" height="7" fill="#2f6fe0"/><rect x="9" y="9" width="7" height="7" fill="#2f6fe0"/><path d="M2 3 H5" stroke="#fff"/><path d="M10.5 12.5 L12 14 L14.5 11" fill="none" stroke="#fff"/></svg>
<svg class="a" style="left:1240px;top:8px" width="24" height="14" viewBox="0 0 24 14"><rect x=".6" y=".6" width="22.8" height="12.8" rx="1" fill="none" stroke="#fff" stroke-width="1.1"/><path d="M3 4 H21 M3 6.8 H21" stroke="#fff" stroke-width="1.1" stroke-dasharray="1.2 1"/><path d="M6 10 H18" stroke="#fff" stroke-width="1.1"/></svg>
<svg class="a" style="left:1275px;top:7px" width="16" height="15" viewBox="0 0 16 15"><rect x=".6" y=".6" width="14.8" height="13.8" rx="1" fill="none" stroke="#fff" stroke-width="1.1"/><path d="M1 9.5 H15 M8 9.5 V14" stroke="#fff" stroke-width="1.1"/></svg>
<div class="a" style="left:1309px;top:7.5px;font-size:11.5px;letter-spacing:-0.3px;line-height:14px;color:#fff;white-space:nowrap">5:18 PM</div></div>
</body></html>
